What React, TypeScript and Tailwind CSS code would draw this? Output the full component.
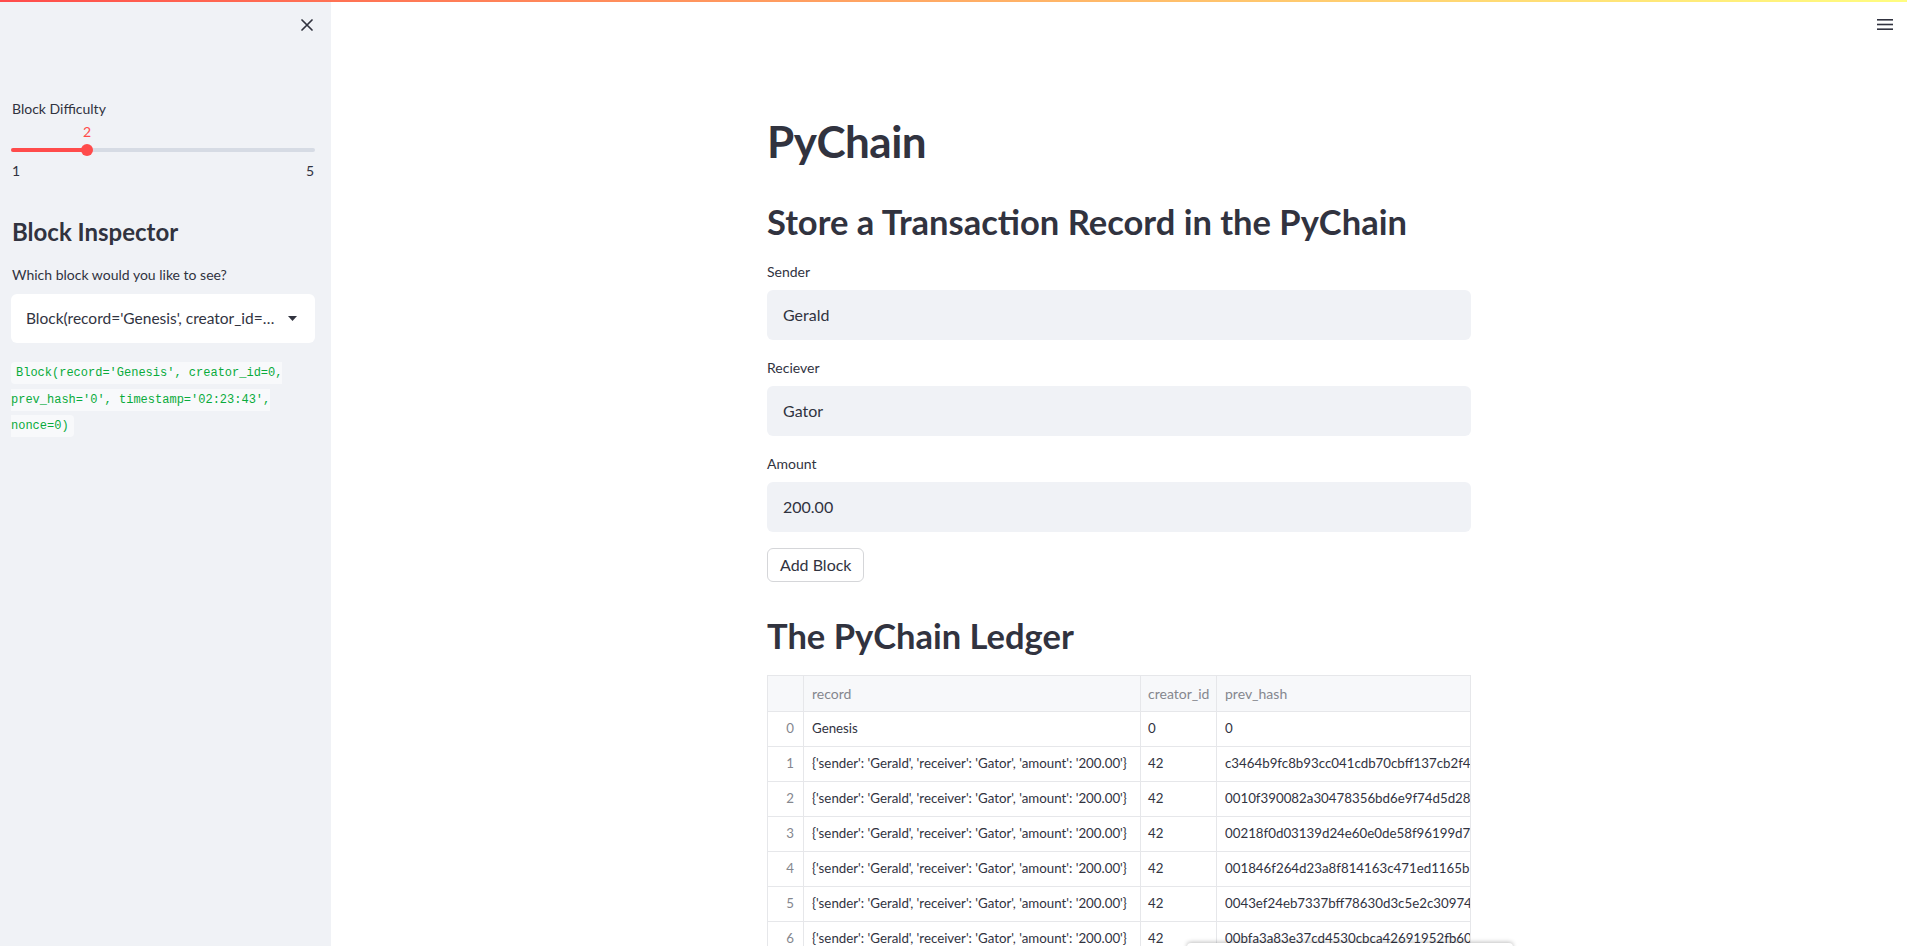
import React from "react";

const SANS = { fontFamily: "Lato, 'Noto Sans', sans-serif" };
const MONO = { fontFamily: "'DejaVu Sans Mono', 'Liberation Mono', monospace" };

const rows = [
  { i: 0, record: "Genesis", creator: "0", hash: "0" },
  { i: 1, record: "{'sender': 'Gerald', 'receiver': 'Gator', 'amount': '200.00'}", creator: "42", hash: "c3464b9fc8b93cc041cdb70cbff137cb2f47d8a1e2" },
  { i: 2, record: "{'sender': 'Gerald', 'receiver': 'Gator', 'amount': '200.00'}", creator: "42", hash: "0010f390082a30478356bd6e9f74d5d2846a91c3b7" },
  { i: 3, record: "{'sender': 'Gerald', 'receiver': 'Gator', 'amount': '200.00'}", creator: "42", hash: "00218f0d03139d24e60e0de58f96199d72568b1e4" },
  { i: 4, record: "{'sender': 'Gerald', 'receiver': 'Gator', 'amount': '200.00'}", creator: "42", hash: "001846f264d23a8f814163c471ed1165b50b3d9a2" },
  { i: 5, record: "{'sender': 'Gerald', 'receiver': 'Gator', 'amount': '200.00'}", creator: "42", hash: "0043ef24eb7337bff78630d3c5e2c309747fa1d28" },
  { i: 6, record: "{'sender': 'Gerald', 'receiver': 'Gator', 'amount': '200.00'}", creator: "42", hash: "00bfa3a83e37cd4530cbca42691952fb60917e3c5" },
];

function Field({ label, value }: { label: string; value: string }) {
  return (
    <div className="flex flex-col">
      <div className="h-[20px] mb-[9px] flex items-center text-[14px] text-[#31333f]">{label}</div>
      <div className="h-[50px] rounded-[6px] bg-[#f0f2f6] flex items-center pl-[16px] text-[16px] text-[#31333f]">
        {value}
      </div>
    </div>
  );
}

export default function App() {
  return (
    <div className="relative flex w-full h-[946px] overflow-hidden bg-white text-[#31333f]" style={SANS}>
      {/* top decoration */}
      <div className="absolute top-0 left-0 right-0 h-[2px] bg-gradient-to-r from-[#ff4b4b] to-[#fffd80] z-10" />

      {/* Sidebar */}
      <aside className="w-[331px] shrink-0 h-full bg-[#f0f2f6] pl-[11px] pr-[16px]">
        <div className="flex justify-end pt-[19px] pr-[2px]">
          <svg width="12" height="12" viewBox="0 0 12 12" fill="none">
            <path d="M1 1 L11 11 M11 1 L1 11" stroke="#31333f" strokeWidth="1.7" strokeLinecap="round" />
          </svg>
        </div>

        <div className="mt-[67px] h-[20px] flex items-center text-[14px] pl-[1px]">Block Difficulty</div>

        <div className="mt-[4px] h-[18px] flex items-center pl-[72px] text-[14px] text-[#ff4b4b]">2</div>
        <div className="relative mt-[4px] h-[12px] w-[304px] flex items-center">
          <div className="w-full h-[4px] rounded-full bg-[#d6dbe4]" />
          <div className="absolute left-0 top-[4px] h-[4px] w-[76px] rounded-full bg-[#ff4b4b]" />
          <div className="absolute left-[70px] top-0 w-[12px] h-[12px] rounded-full bg-[#ff4b4b]" />
        </div>
        <div className="mt-[5px] h-[18px] w-[304px] flex items-center justify-between text-[14px] pl-[1px] pr-[1px]">
          <span>1</span>
          <span>5</span>
        </div>

        <h2 className="mt-[37px] h-[32px] flex items-center text-[24px] font-bold pl-[1px]">Block Inspector</h2>

        <div className="mt-[16px] h-[20px] flex items-center text-[14px] pl-[1px]">Which block would you like to see?</div>

        <div className="mt-[10px] h-[49px] w-[304px] rounded-[6px] bg-white flex items-center justify-between pl-[15px] pr-[18px] text-[15.5px]">
          <span className="whitespace-nowrap">Block(record='Genesis', creator_id=…</span>
          <svg width="9" height="5" viewBox="0 0 9 5" className="shrink-0">
            <path d="M0 0 L9 0 L4.5 5 Z" fill="#31333f" />
          </svg>
        </div>

        <p className="mt-[17px] w-[300px] text-[12px] leading-[25.6px]" style={MONO}>
          <code className="text-[#09ab3b] bg-[#f8f9fb] rounded-[4px] py-[4px] px-[5px]">
            Block(record='Genesis', creator_id=0, prev_hash='0', timestamp='02:23:43', nonce=0)
          </code>
        </p>
      </aside>

      {/* Main */}
      <main className="relative flex-1 h-full">
        <div className="absolute top-[19px] right-[14px]">
          <svg width="16" height="11" viewBox="0 0 16 11">
            <rect x="0" y="0" width="16" height="1.6" fill="#31333f" />
            <rect x="0" y="4.7" width="16" height="1.6" fill="#31333f" />
            <rect x="0" y="9.4" width="16" height="1.6" fill="#31333f" />
          </svg>
        </div>

        <div className="w-[704px] mx-auto pt-[115px] flex flex-col">
          <h1 className="h-[52px] flex items-center text-[44px] font-bold tracking-[-0.5px]">PyChain</h1>
          <h2 className="mt-[33px] h-[44px] flex items-center text-[34.5px] font-bold">
            Store a Transaction Record in the PyChain
          </h2>

          <div className="mt-[17px] flex flex-col gap-[17px]">
            <Field label="Sender" value="Gerald" />
            <Field label="Reciever" value="Gator" />
            <Field label="Amount" value="200.00" />
          </div>

          <div className="mt-[16px]">
            <button className="h-[34px] px-[12px] rounded-[6px] border border-[#d5d6d9] bg-white text-[16px] text-[#31333f]">
              Add Block
            </button>
          </div>

          <h2 className="mt-[32px] h-[44px] flex items-center text-[34.5px] font-bold">The PyChain Ledger</h2>

          <div className="mt-[17px] border border-[#e6e7ea] text-[14px]">
            <div className="flex h-[36px] bg-[#f7f8fa] text-[#85878e] border-b border-[#e6e7ea]">
              <div className="w-[36px] shrink-0 border-r border-[#e6e7ea]" />
              <div className="w-[337px] shrink-0 border-r border-[#e6e7ea] flex items-center pl-[8px]">record</div>
              <div className="w-[76px] shrink-0 border-r border-[#e6e7ea] flex items-center pl-[7px]">creator_id</div>
              <div className="flex-1 flex items-center pl-[8px]">prev_hash</div>
            </div>
            {rows.map((r) => (
              <div key={r.i} className="flex h-[35px] border-b border-[#e6e7ea] text-[13.3px]">
                <div className="w-[36px] shrink-0 border-r border-[#e6e7ea] flex items-center justify-end pr-[9px] text-[#85878e]">
                  {r.i}
                </div>
                <div className="w-[337px] shrink-0 border-r border-[#e6e7ea] flex items-center pl-[8px] whitespace-nowrap">
                  {r.record}
                </div>
                <div className="w-[76px] shrink-0 border-r border-[#e6e7ea] flex items-center pl-[7px]">{r.creator}</div>
                <div className="flex-1 min-w-0 flex items-center pl-[8px] whitespace-nowrap overflow-hidden">{r.hash}</div>
              </div>
            ))}
          </div>
        </div>

        {/* bottom floating shadow */}
        <div className="absolute left-[856px] top-[943px] w-[326px] h-[20px] bg-white rounded-[4px] shadow-[0_-1px_4px_rgba(0,0,0,0.25)]" />
      </main>
    </div>
  );
}
